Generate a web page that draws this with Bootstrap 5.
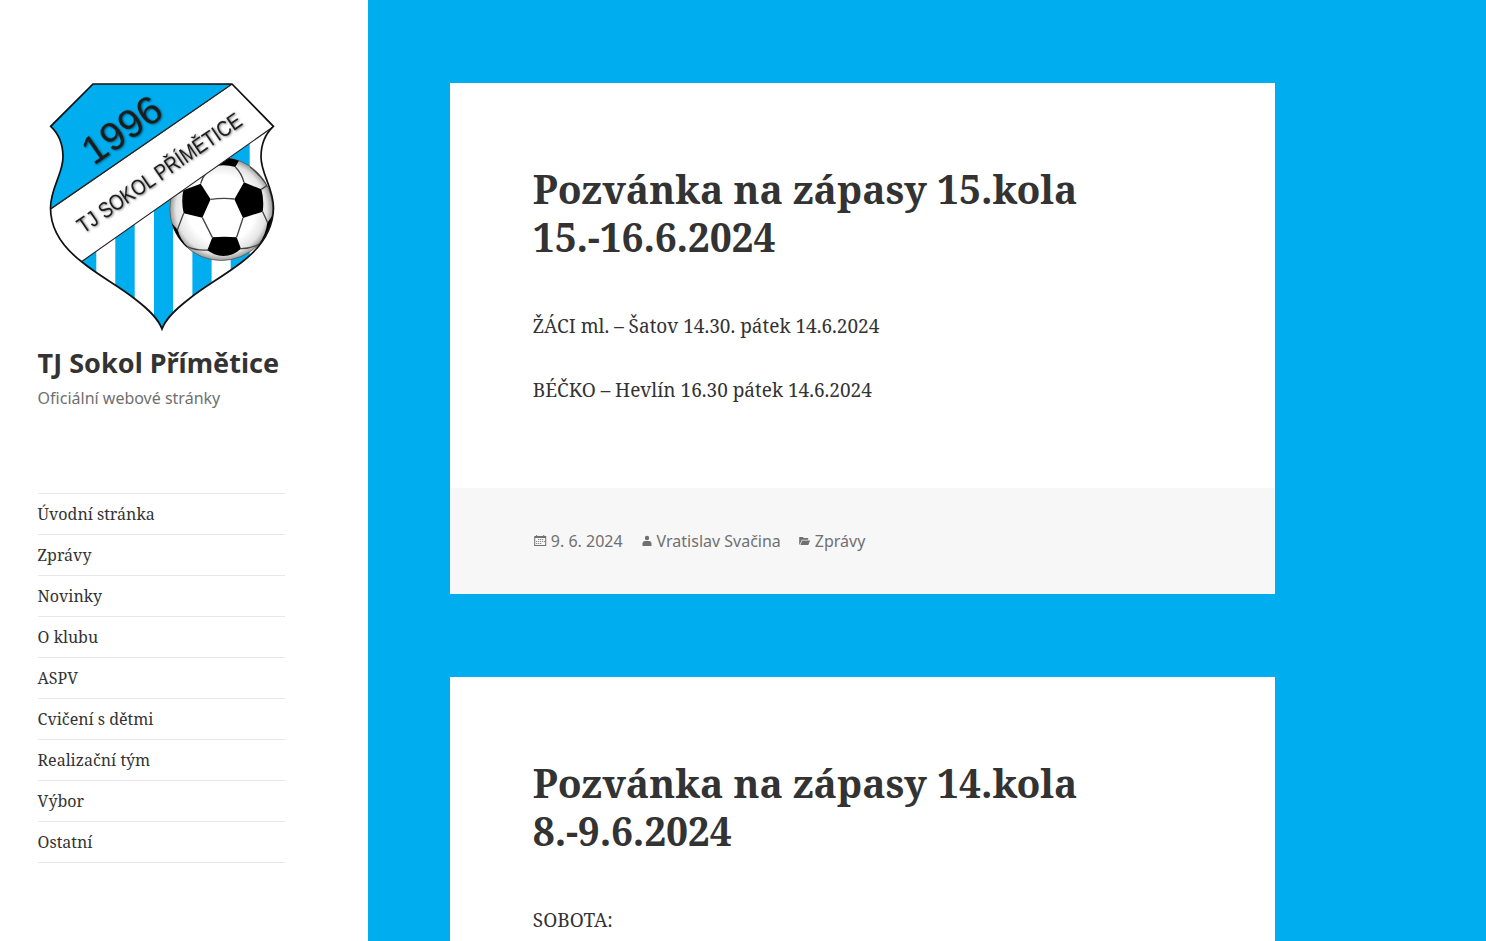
<!DOCTYPE html>
<html lang="cs">
<head>
<meta charset="utf-8">
<meta name="viewport" content="width=device-width, initial-scale=1">
<title>TJ Sokol Přímětice</title>
<link rel="stylesheet" href="https://cdn.jsdelivr.net/npm/bootstrap@5.3.0/dist/css/bootstrap.min.css">
<style>
body{background:#00aeef;color:#333;font:19px/32px "Noto Serif","Droid Serif","Liberation Serif",serif}
a{color:inherit;text-decoration:none}
.page{height:100vh;overflow:hidden}
.sidebar{width:368px;min-height:941px;padding:83px 83px 0 37.6px}
.crest{width:248px;height:248px;margin-bottom:16px}
.sans{font-family:"Noto Sans",sans-serif}
.site-name{font-size:27px;line-height:32px;font-weight:700;margin-bottom:7px;white-space:nowrap;letter-spacing:.02px}
.tagline{font-size:16px;line-height:24px;color:#707070;margin-bottom:83px}
.site-menu{width:247.5px;--bs-nav-link-color:#333;--bs-nav-link-hover-color:#707070;--bs-nav-link-padding-x:0;--bs-nav-link-padding-y:8px;border-bottom:1px solid #e7e7e7}
.site-menu .nav-link{font-size:16px;line-height:24px;border-top:1px solid #e7e7e7}
.posts{padding:83px 0 0 82px;gap:83px}
.post{width:825px;--bs-card-border-width:0;--bs-card-border-radius:0;--bs-card-color:#333;flex-shrink:0}
.post .card-body{padding:82px 83px 82px 82.8px}
.post h2{font-size:39px;line-height:48px;font-weight:700;margin-bottom:49px;letter-spacing:-.02px}
.post .post-dates{letter-spacing:-.18px}
.post p{margin-bottom:32px}
.post p:last-child{margin-bottom:0}
.post .card-footer{background:#f7f7f7;color:#707070;font-size:16px;line-height:24px;padding:41px 83px 41px 82.8px;border:0;border-radius:0}
.post .card-footer svg{width:16px;height:16px;fill:#707070}
.meta-text{margin-left:2px}
.meta-user,.meta-cat{margin-left:16px}
</style>
</head>
<body>
<div class="page d-flex align-items-start">
<aside class="sidebar bg-white flex-shrink-0">
<a href="#" class="d-block">
<svg class="crest d-block" viewBox="38 83 248 248" role="img" aria-label="TJ Sokol Přímětice">
<defs>
<path id="shield" d="M93 84H232L273.4 126.3C265 134 261 145 261 157C261 174 273.5 188 273.5 208C273 231 259 249 242 262C224 276 205 286 189 299C176 309 166 318 162 329C158 318 148 309 135 299C119 286 99 276 82 262C65 249 50.5 231 50.5 208C50.5 188 63 174 63 157C63 145 59 134 50.7 126.3Z"/>
<clipPath id="inside"><use href="#shield"/></clipPath>
<clipPath id="ballclip"><circle cx="221.3" cy="209" r="51.5"/></clipPath>
<radialGradient id="shade"><stop offset=".65" stop-color="#fff"/><stop offset=".88" stop-color="#e4e4e4"/><stop offset="1" stop-color="#999"/></radialGradient>
<filter id="soft" x="-20%" y="-40%" width="140%" height="180%"><feDropShadow dx="1" dy=".5" stdDeviation="1.3" flood-color="#000" flood-opacity=".6"/></filter>
</defs>
<g clip-path="url(#inside)">
<path fill="#fff" d="M38 83h248v248H38z"/>
<path fill="#00aeef" d="M77 120h19.3v200H77zM115.3 120h19.4v200h-19.4zM154 120h19v215h-19zM192.4 120h19.2v200h-19.2zM230.7 120h19v200h-19z"/>
</g>
<circle cx="221.3" cy="209" r="51.5" fill="url(#shade)" stroke="#555" stroke-width=".8"/>
<g clip-path="url(#ballclip)"><g transform="translate(160 150) scale(.33333)">
<path d="M70 121L122 101L152 148L127 203L71 190Q63 155 70 121ZM252 97L304 118Q313 150 308 185L249 204L223 148ZM157 262Q193 258 230 262L243 296Q195 338 142 301ZM172 47L190 20L238 30L226 51Q200 43 172 47ZM34 218L53 239Q61 270 85 292L66 288L30 240ZM342 190L322 218Q318 252 296 284L325 270Z"/>
<path fill="none" stroke="#444" stroke-width="4" d="M152 148Q190 143 223 147M127 203L157 262M249 204L230 262M122 101Q130 66 172 47M252 97Q245 70 226 51M71 190L52 240M308 185L323 218M304 118L322 106Q300 75 270 50M70 121L54 130M81 290Q110 303 145 300M240 296Q270 297 298 282"/>
</g></g>
<path clip-path="url(#inside)" fill="#fff" stroke="#222" stroke-width="1.1" d="M232 84L48 211L48 285L81 262L280 122V70z"/>
<path clip-path="url(#inside)" fill="#00aeef" stroke="#222" stroke-width="1.1" d="M232 84L46 212V80z"/>
<use href="#shield" fill="none" stroke="#111" stroke-width="1.7"/>
<g fill="#1c1c1c" font-family="Liberation Sans, sans-serif" filter="url(#soft)">
<text transform="translate(93.5 166) rotate(-35)" font-size="39.5" textLength="88">1996</text>
<text transform="translate(83.5 234) rotate(-34.4)" font-size="22" textLength="194" lengthAdjust="spacingAndGlyphs">TJ SOKOL PŘÍMĚTICE</text>
</g>
</svg>
</a>
<h1 class="site-name sans"><a href="#">TJ Sokol Přímětice</a></h1>
<p class="tagline sans">Oficiální webové stránky</p>
<nav class="site-menu nav flex-column">
<a class="nav-link" href="#">Úvodní stránka</a>
<a class="nav-link" href="#">Zprávy</a>
<a class="nav-link" href="#">Novinky</a>
<a class="nav-link" href="#">O klubu</a>
<a class="nav-link" href="#">ASPV</a>
<a class="nav-link" href="#">Cvičení s dětmi</a>
<a class="nav-link" href="#">Realizační tým</a>
<a class="nav-link" href="#">Výbor</a>
<a class="nav-link" href="#">Ostatní</a>
</nav>
</aside>
<main class="posts d-flex flex-column">
<article class="post card">
<div class="card-body">
<h2><a href="#">Pozvánka na zápasy 15.kola<br><span class="post-dates">15.-16.6.2024</span></a></h2>
<p>ŽÁCI ml. – Šatov 14.30. pátek 14.6.2024</p>
<p>BÉČKO – Hevlín 16.30 pátek 14.6.2024</p>
</div>
<footer class="card-footer sans d-flex">
<a href="#" class="d-flex align-items-center"><svg viewBox="0 0 16 16"><path fill-rule="evenodd" d="M1.2 3h2V2h1v1h6V2h1v1h2v10h-12zM2.2 5v7h10V5zM5.2 6h1v1h-1zm2 0h1v1h-1zm2 0h1v1h-1zM3.2 8h1v1h-1zm2 0h1v1h-1zm2 0h1v1h-1zm2 0h1v1h-1zm1.8 0h.8v1H11zM3.2 10h1v1h-1zm2 0h1v1h-1zm2 0h1v1h-1z"/></svg><span class="meta-text">9. 6. 2024</span></a>
<a href="#" class="meta-user d-flex align-items-center"><svg viewBox="0 0 16 16"><circle cx="8" cy="5" r="2.2"/><path d="M3.5 13v-2.5Q3.5 8 5.7 8h4.6q2.2 0 2.2 2.5V13z"/></svg><span class="meta-text">Vratislav Svačina</span></a>
<a href="#" class="meta-cat d-flex align-items-center"><svg viewBox="0 0 16 16"><path d="M2.2 4h3.6l1 1h4.4v1.8H4.8L2.8 11.5h-.6zM5.2 7.5h7.9L11.3 12H3.4z"/></svg><span class="meta-text">Zprávy</span></a>
</footer>
</article>
<article class="post card">
<div class="card-body">
<h2><a href="#">Pozvánka na zápasy 14.kola<br><span class="post-dates">8.-9.6.2024</span></a></h2>
<p>SOBOTA:</p>
</div>
</article>
</main>
</div>
<script src="https://cdn.jsdelivr.net/npm/bootstrap@5.3.0/dist/js/bootstrap.bundle.min.js"></script>
</body>
</html>
